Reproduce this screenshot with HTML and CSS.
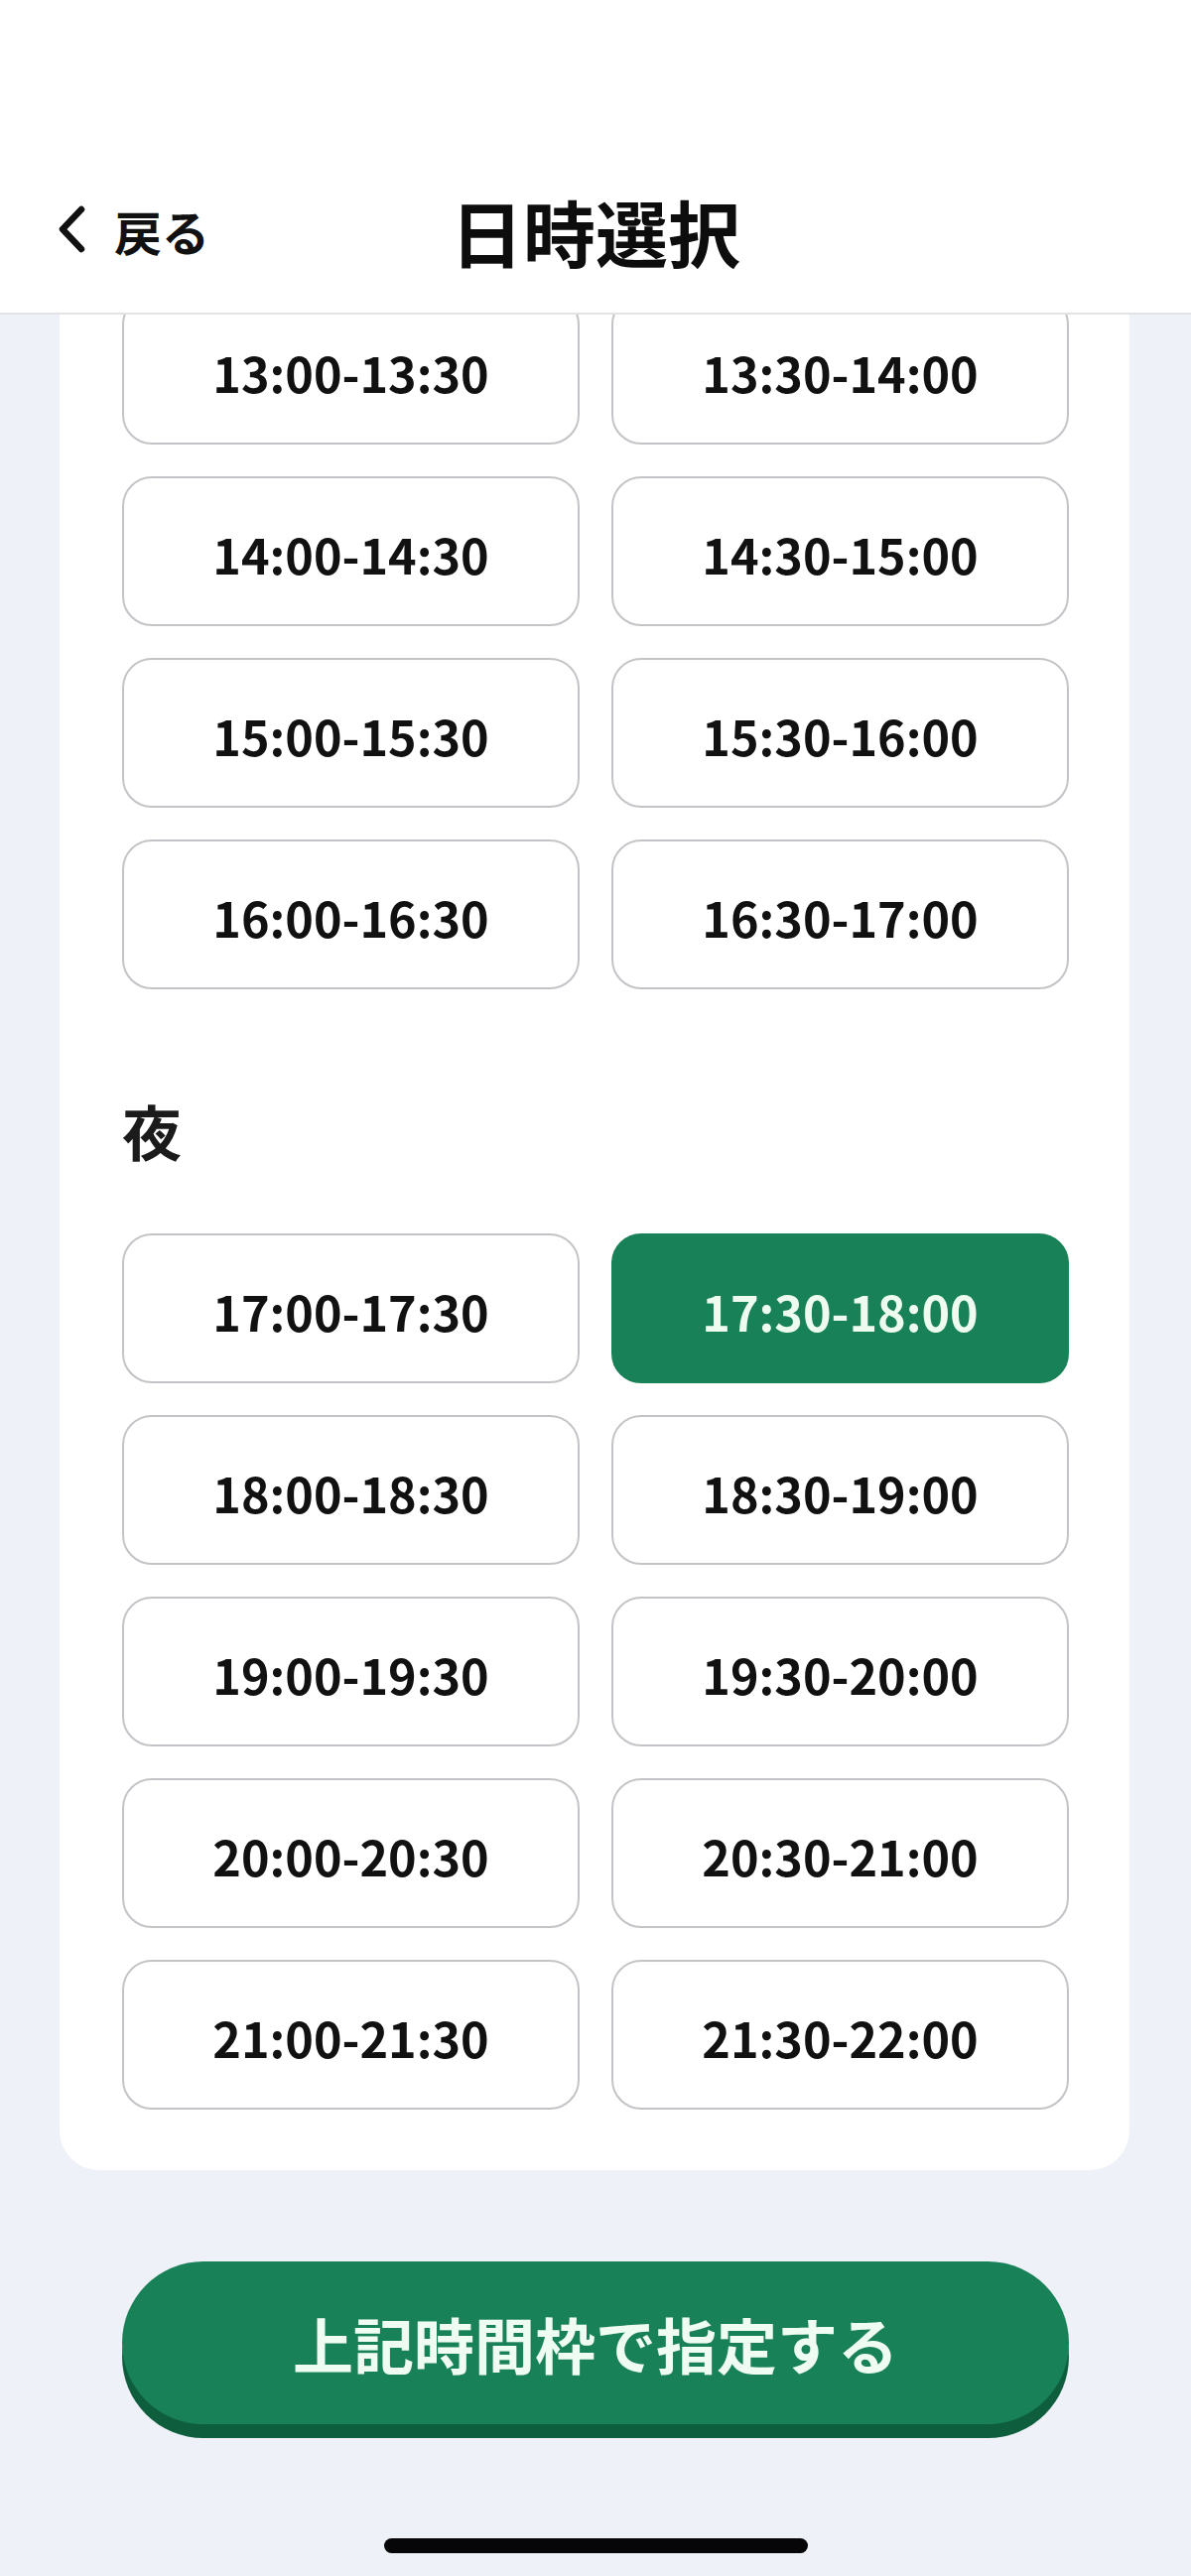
FILE: index.html
```html
<!DOCTYPE html>
<html lang="ja">
<head>
<meta charset="utf-8">
<title>日時選択</title>
<link rel="stylesheet" href="styles.css">
</head>
<body>
<div class="screen">
  <header class="header">
    <div class="nav">
      <a class="back" href="#">
        <svg class="chev" width="30" height="48" viewBox="0 0 30 48" aria-hidden="true">
          <polyline points="24,4 5,24 24,44" fill="none" stroke="#111" stroke-width="6.5" stroke-linecap="round" stroke-linejoin="round"/>
        </svg>
        <span class="back-label">戻る</span>
      </a>
      <h1 class="title">日時選択</h1>
      <div class="nav-spacer"></div>
    </div>
  </header>

  <main class="scroll">
    <section class="card">
      <div class="slots">
        <button class="slot">13:00-13:30</button>
        <button class="slot">13:30-14:00</button>
        <button class="slot">14:00-14:30</button>
        <button class="slot">14:30-15:00</button>
        <button class="slot">15:00-15:30</button>
        <button class="slot">15:30-16:00</button>
        <button class="slot">16:00-16:30</button>
        <button class="slot">16:30-17:00</button>
      </div>

      <h2 class="period">夜</h2>

      <div class="slots">
        <button class="slot">17:00-17:30</button>
        <button class="slot is-selected">17:30-18:00</button>
        <button class="slot">18:00-18:30</button>
        <button class="slot">18:30-19:00</button>
        <button class="slot">19:00-19:30</button>
        <button class="slot">19:30-20:00</button>
        <button class="slot">20:00-20:30</button>
        <button class="slot">20:30-21:00</button>
        <button class="slot">21:00-21:30</button>
        <button class="slot">21:30-22:00</button>
      </div>
    </section>
  </main>

  <div class="actions">
    <button class="submit">上記時間枠で指定する</button>
  </div>

  <div class="home-bar"><span class="home-indicator"></span></div>
</div>
</body>
</html>
```

FILE: styles.css
```css
* {
  box-sizing: border-box;
}

html, body {
  margin: 0;
  padding: 0;
}

body {
  width: 1200px;
  height: 2596px;
  overflow: hidden;
  background: #eef1f8;
  font-family: "Noto Sans CJK JP", "Noto Sans", sans-serif;
  color: #111;
}

.screen {
  display: flex;
  flex-direction: column;
  height: 2596px;
}

/* Header */
.header {
  position: relative;
  z-index: 2;
  height: 317px;
  background: #fff;
  border-bottom: 2px solid #e3e3e6;
  padding-top: 182px;
}

.nav {
  display: grid;
  grid-template-columns: 1fr auto 1fr;
  align-items: center;
  height: 100px;
}

.back {
  display: flex;
  align-items: center;
  gap: 27px;
  padding-left: 58px;
  color: #111;
  text-decoration: none;
}

.chev {
  display: block;
  margin-top: -2px;
}

.back-label {
  font-size: 48px;
  font-weight: 700;
  line-height: 1;
}

.title {
  margin: 0;
  font-size: 73px;
  font-weight: 700;
  line-height: 1;
  color: #0d0d0d;
}

/* Scroll area */
.scroll {
  overflow: hidden;
}

.card {
  margin: -60px 62px 0 60px;
  padding: 40px 61px 61px 63px;
  background: #fff;
  border-radius: 0 0 40px 40px;
}

.slots {
  display: grid;
  grid-template-columns: 1fr 1fr;
  gap: 32px 32px;
}

.slot {
  height: 151px;
  border: 2px solid #c4c4c8;
  border-radius: 30px;
  background: #fff;
  font-family: "Noto Sans CJK JP", "Noto Sans", sans-serif;
  font-size: 48.5px;
  font-weight: 700;
  color: #111;
  padding: 0;
  padding-top: 6px;
  line-height: 1;
}

.slot.is-selected {
  background: #188157;
  border-color: #188157;
  color: #eefcf0;
}

.period {
  margin: 113px 0 75px;
  height: 58px;
  font-size: 60px;
  font-weight: 700;
  line-height: 58px;
  color: #1b1b1b;
}

/* Submit */
.actions {
  padding: 92px 123px 0;
}

.submit {
  display: block;
  width: 100%;
  height: 164px;
  border: none;
  border-radius: 82px;
  background: #188157;
  box-shadow: 0 14px 0 #0e5e3e;
  font-family: "Noto Sans CJK JP", "Noto Sans", sans-serif;
  font-size: 61px;
  font-weight: 700;
  color: #effcf1;
  line-height: 1;
  padding: 0;
}

/* Home indicator */
.home-bar {
  display: flex;
  justify-content: center;
  padding-top: 115px;
}

.home-indicator {
  display: block;
  width: 427px;
  height: 15px;
  border-radius: 8px;
  background: #060608;
}
```
